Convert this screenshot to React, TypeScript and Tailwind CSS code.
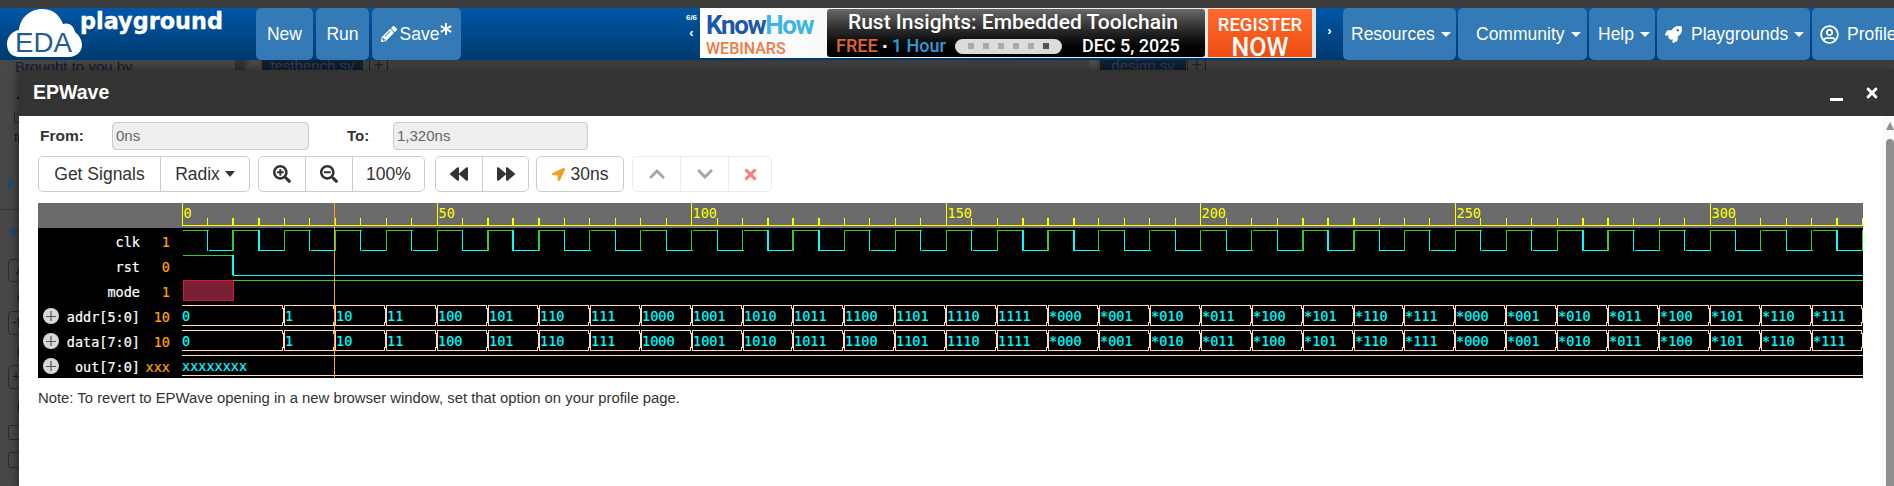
import React from "react";
import { FaPencilAlt, FaAsterisk, FaRocket, FaRegUserCircle, FaSearchPlus, FaSearchMinus, FaBackward, FaForward, FaLocationArrow, FaChevronUp, FaChevronDown, FaTimes } from "react-icons/fa";

const Caret = () => <span className="ml-[6px] inline-block h-0 w-0 border-x-[5px] border-t-[5px] border-x-transparent border-t-white" />;
const DarkCaret = () => <span className="ml-[5px] inline-block h-0 w-0 border-x-[5px] border-t-[6px] border-x-transparent border-t-[#333]" />;

function NavBtn({ className, children }: { className: string; children: React.ReactNode }) {
  return <div className={"flex h-[52px] shrink-0 items-center rounded-[5px] bg-[#337ab7] text-[17.5px] text-white " + className}>{children}</div>;
}

const Logo = () => (
  <svg width="240" height="52" viewBox="0 8 240 52" className="shrink-0">
    <path d="M20 57 C10 57 7 50 7 44 C7 37 12 31 19 30 C20 18 30 9 42 9 C52 9 59 14 63 24 C68 22 74 25 75 32 C79 35 82 40 82 45 C82 52 76 57 69 57 Z" fill="#fff" />
    <text x="15" y="52" fontFamily="Liberation Sans" fontSize="28" fill="#1f5c99" textLength="57" lengthAdjust="spacingAndGlyphs">EDA</text>
    <text x="80" y="29" fontFamily="DejaVu Sans" fontWeight="700" fontSize="23" fill="#fff" stroke="#fff" strokeWidth="0.4" textLength="143" lengthAdjust="spacingAndGlyphs">playground</text>
  </svg>
);

function Banner() {
  return (
    <div className="flex h-[50px] w-[616px] shrink-0 gap-[3px] bg-gradient-to-r from-white to-[#e4e4e4] py-px pl-px pr-[4px] font-['Roboto',sans-serif]">
      <div className="flex w-[123px] shrink-0 flex-col pl-[5px] pt-[3px]">
        <div className="text-[26px] font-bold leading-[27px] tracking-[-1.4px] text-[#1d58a8]">Know<span className="text-[#3eb4e8]">How</span></div>
        <div className="mt-[1px] text-[16px] font-medium leading-[18px] text-[#ee7a45]">WEBINARS</div>
      </div>
      <div className="flex w-[378px] shrink-0 flex-col rounded-[3px] bg-gradient-to-b from-[#6a6a6a] via-[#222] to-black px-[9px] text-white">
        <div className="mt-px pr-[6px] text-center text-[21px] font-medium leading-[25px]">Rust Insights: Embedded Toolchain</div>
        <div className="mt-[1px] flex items-center text-[18px] font-medium leading-[20px]">
          <span className="text-[#e0632e]">FREE</span>
          <span className="ml-[5px] text-[12px] text-white">▪</span>
          <span className="ml-[5px] text-[#2d9fd8]">1 Hour</span>
          <span className="ml-[9px] flex h-[15px] w-[107px] items-center justify-center gap-[9px] rounded-full bg-[#dcdcdc]">
            {[0, 1, 2, 3, 4].map((i) => <i key={i} className="h-[6px] w-[6px] bg-[#aaa]" />)}
            <i className="h-[6px] w-[6px] bg-[#555]" />
          </span>
          <span className="ml-[20px]">DEC 5, 2025</span>
        </div>
      </div>
      <div className="flex w-[104px] shrink-0 flex-col items-center bg-gradient-to-b from-[#ff6a2a] to-[#f04c0e] text-white">
        <div className="mt-[4px] text-[18.5px] font-medium leading-[24px]">REGISTER</div>
        <div className="text-[25px] font-medium leading-[22px]">NOW</div>
      </div>
    </div>
  );
}

function Nav() {
  return (
    <div className="flex h-[52px] bg-gradient-to-b from-[#0057a6] to-[#003a70]">
      <Logo />
      <div className="ml-4 flex gap-[3px]">
        <NavBtn className="w-[57px] justify-center">New</NavBtn>
        <NavBtn className="w-[53px] justify-center">Run</NavBtn>
        <NavBtn className="w-[89px] justify-center gap-[3px]"><FaPencilAlt size={16} />Save<FaAsterisk size={12} className="mb-[10px] -ml-[2px]" /></NavBtn>
      </div>
      <div className="ml-[222px] flex w-[17px] shrink-0 flex-col items-center pt-[5px] text-white">
        <span className="text-[8px] font-bold leading-[10px]">6/6</span>
        <span className="mt-[3px] text-[13px] font-bold leading-[14px]">‹</span>
      </div>
      <Banner />
      <div className="flex w-[27px] shrink-0 justify-center pt-[16px] text-[13px] font-bold leading-[14px] text-white">›</div>
      <div className="flex gap-[2px]">
        <NavBtn className="w-[113px] pl-[8px]">Resources<Caret /></NavBtn>
        <NavBtn className="w-[129px] pl-[18px]">Community<Caret /></NavBtn>
        <NavBtn className="w-[66px] pl-[9px]">Help<Caret /></NavBtn>
        <NavBtn className="w-[153px] pl-[8px]"><FaRocket size={17} /><span className="ml-[9px]">Playgrounds</span><Caret /></NavBtn>
        <NavBtn className="w-[110px] pl-[8px]"><FaRegUserCircle size={19} /><span className="ml-[8px]">Profile</span></NavBtn>
      </div>
    </div>
  );
}

function Behind() {
  const box = "ml-[8px] w-[60px] rounded-[4px] border border-[#2c2c2c] text-[14px] text-[#1d1d1d]";
  return (
    <div className="flex h-[426px] overflow-hidden bg-[#484848] text-[15px]">
      <div className="flex w-[235px] shrink-0 flex-col">
        <div className="ml-[15px] h-[32px] whitespace-nowrap leading-[13px] text-[#142030]">Brought to you by</div>
        <div className="ml-[16px] h-0 w-0 border-x-[5px] border-b-[7px] border-x-transparent border-b-[#182a3e]" />
        <div className="ml-[14px] mt-[14px] h-[10px] w-[10px] border border-[#1c2a38]" />
        <div className="ml-[14px] mt-[8px] text-[12px] leading-[14px] text-[#1c1c1c]">from</div>
        <div className="ml-[8px] mt-[32px] h-0 w-0 border-y-[6px] border-l-[7px] border-y-transparent border-l-[#1e4a6e]" />
        <div className="mt-[20px] h-px bg-[#363636]" />
        <div className="ml-[8px] mt-[19px] h-0 w-0 border-x-[6px] border-t-[8px] border-x-transparent border-t-[#1e4a6e]" />
        <div className={box + " mt-[22px] h-[23px] pl-[7px]"}>A</div>
        <div className="ml-[17px] mt-[9px] h-[14px] text-[14px] font-bold leading-[14px] text-[#1d1d1d]">C</div>
        <div className={box + " mt-[6px] h-[24px] pl-[3px]"}>-t</div>
        <div className="ml-[17px] mt-[10px] h-[14px] font-bold leading-[14px] text-[#1d1d1d]">E</div>
        <div className={box + " mt-[6px] h-[24px] pl-[3px]"}>+</div>
        <div className="ml-[17px] mt-[11px] h-[14px] font-bold leading-[14px] text-[#1d1d1d]">R</div>
        <div className="ml-[8px] mt-[11px] h-[15px] w-[15px] rounded-[2px] border border-[#2c2c2c]" />
        <div className="ml-[8px] mt-[12px] h-[16px] w-[15px] rounded-[2px] border border-[#2c2c2c]" />
      </div>
      <div className="flex h-[10px] flex-1 bg-gradient-to-b from-[#3c3c3c] to-[#4a4a4a]">
        <div className="h-full w-[10px] bg-[#343434]" />
        <div className="ml-[4px] h-full w-[11px] bg-[#4a4a4a]" />
        <div className="ml-[2px] h-full w-[101px] overflow-hidden bg-[#0f2233] text-center leading-[11px] text-[#34404e]">testbench.sv</div>
        <div className="ml-[6px] flex h-full w-[19px] items-center justify-center border-x border-[#222] text-[18px] leading-[10px] text-[#222]">+</div>
        <div className="ml-[701px] h-full w-[8px] bg-[#4e4e4e]" />
        <div className="ml-[3px] h-full w-[86px] overflow-hidden bg-[#0f2233] text-center leading-[11px] text-[#34404e]">design.sv</div>
        <div className="ml-px flex h-full w-[19px] items-center justify-center border-x border-[#222] text-[18px] leading-[10px] text-[#222]">+</div>
      </div>
    </div>
  );
}

const THICK = new Set([2, 3, 12, 13, 14, 23, 24, 25, 33, 34, 35, 44, 45, 46, 55, 56, 65, 66]);
const xk = (k: number) => 182.4 + 25.46 * k;
const ln = (v: number) => Math.floor(v) + 0.5;
const MONO = "'DejaVu Sans Mono', monospace";
const BUS = "#ffdab9";
const GREEN = "#32cd32";
const CYAN = "#00ffff";
const ORANGE = "#ffa500";

function edge(k: number, y1: number, y2: number, color: string) {
  const thick = THICK.has(k);
  const x = thick ? Math.round(xk(k)) : ln(xk(k));
  return <line key={`e${k}`} x1={x} x2={x} y1={y1} y2={y2} stroke={color} strokeWidth={thick ? 2 : 1} />;
}

function busLabel(v: number) {
  if (v < 16) return v.toString(2);
  return "*" + (v % 8).toString(2).padStart(3, "0");
}

function Bus({ top }: { top: number }) {
  const bot = top + 20;
  const items = [];
  const tA = top + 0.5;
  const bA = bot + 0.5;
  for (let v = 0; v < 32; v++) {
    const s = v === 0 ? 182 : Math.round(xk(2 + 2 * v));
    const e = Math.round(xk(4 + 2 * v));
    const d = v === 0
      ? `M${s} ${tA} H${e - 2} L${e - 1} ${tA + 3} V${bA - 3} L${e - 2} ${bA} H${s}`
      : `M${s} ${tA + 3} L${s + 1} ${tA} H${e - 2} L${e - 1} ${tA + 3} V${bA - 3} L${e - 2} ${bA} H${s + 1} L${s} ${bA - 3} Z`;
    items.push(<path key={v} d={d} fill="none" stroke={BUS} strokeWidth={1} shapeRendering="crispEdges" />);
    items.push(<text key={`t${v}`} x={v === 0 ? 182 : s + 1} y={top + 16} fill={CYAN} stroke={CYAN} strokeWidth="0.2" fontFamily={MONO} fontSize="13.5">{busLabel(v)}</text>);
  }
  return <g>{items}</g>;
}

function Plus({ cy }: { cy: number }) {
  return (
    <g>
      <circle cx="51" cy={cy} r="8" fill="#d8d8d8" />
      <path d={`M46 ${cy + 0.5} H56 M51 ${cy - 5} V${cy + 5}`} stroke="#555" strokeWidth="1.2" />
    </g>
  );
}

function Wave() {
  const ticks = [];
  for (let k = 0; k <= 66; k++) {
    const major = k % 10 === 0;
    const thick = THICK.has(k);
    const x = thick ? Math.round(xk(k)) : ln(xk(k));
    ticks.push(<line key={k} x1={x} x2={x} y1={major ? 203 : 218} y2={226} stroke="#ffff00" strokeWidth={thick ? 2 : 1} />);
    if (major) ticks.push(<text key={`l${k}`} x={x + 1} y={218} fill="#ffff00" fontFamily={MONO} fontSize="13.5">{k * 5}</text>);
  }
  const clk = [];
  for (let k = 0; k <= 66; k++) {
    if (k < 66) {
      const a = xk(k), b = xk(k + 1);
      const hi = k % 2 === 0;
      clk.push(<line key={`h${k}`} x1={Math.round(a) + 1} x2={Math.round(b) + 1} y1={hi ? 230.5 : 250.5} y2={hi ? 230.5 : 250.5} stroke={hi ? GREEN : CYAN} />);
    }
    if (k > 0) clk.push(edge(k, 230, 251, k % 2 === 0 ? GREEN : CYAN));
  }
  const names: [string, string, number][] = [["clk", "1", 247], ["rst", "0", 272], ["mode", "1", 297], ["addr[5:0]", "10", 322], ["data[7:0]", "10", 347], ["out[7:0]", "xxx", 372]];
  return (
    <svg width="1825" height="175" viewBox="38 203 1825 175" className="block bg-black">
      <rect x="38" y="203" width="1825" height="25" fill="#6b6b6b" />
      <line x1="182" x2="1863" y1="225.5" y2="225.5" stroke="#ffff00" />
      {ticks}
      {names.map(([n, v, y]) => (
        <g key={n} fontFamily={MONO} fontSize="13.5" strokeWidth="0.2">
          <text x="140" y={y} textAnchor="end" fill="#fff" stroke="#fff">{n}</text>
          <text x="170" y={y} textAnchor="end" fill={ORANGE} stroke={ORANGE}>{v}</text>
        </g>
      ))}
      <Plus cy={316} />
      <Plus cy={341} />
      <Plus cy={366} />
      {clk}
      <path d="M183 255.5 H233" stroke={GREEN} fill="none" />
      <path d="M233 255 V275.5 H1863" stroke={CYAN} fill="none" />
      <line x1="233" x2="233" y1="255" y2="275" stroke={CYAN} strokeWidth="2" />
      <rect x="183.5" y="280.5" width="50" height="20" fill="#7a2035" stroke="#dc143c" />
      <line x1="233" x2="1863" y1="280.5" y2="280.5" stroke={GREEN} />
      <Bus top={305} />
      <Bus top={330} />
      <line x1="182" x2="1863" y1="355.5" y2="355.5" stroke={BUS} />
      <line x1="182" x2="1863" y1="375.5" y2="375.5" stroke={BUS} />
      <text x="182" y="371" fill={CYAN} stroke={CYAN} strokeWidth="0.2" fontFamily={MONO} fontSize="13.5">xxxxxxxx</text>
      <line x1="334.5" x2="334.5" y1="203" y2="378" stroke="#f5a623" />
    </svg>
  );
}

const seg = "flex h-full items-center justify-center border-r border-[#ccc] last:border-r-0";
const group = "flex h-[36px] shrink-0 rounded-[5px] border border-[#ccc] text-[17.5px] text-[#333]";

function Modal() {
  return (
    <div className="absolute bottom-0 left-[19px] right-0 top-[70px] flex flex-col shadow-[0_0_10px_rgba(0,0,0,0.6)]">
      <div className="flex h-[46px] shrink-0 items-center bg-[#333] pl-[14px] text-white">
        <span className="text-[19.5px] font-bold">EPWave</span>
        <svg width="14" height="3" className="ml-[1721px] mt-[12px]"><rect width="13" height="3" fill="#fff" /></svg>
        <FaTimes size={16} className="ml-[20px] -mt-[1px] text-white" />
      </div>
      <div className="flex min-h-0 flex-1 bg-white">
        <div className="min-w-0 flex-1 pl-[19px] text-[#333]">
          <div className="mt-[6px] flex h-[28px] items-center text-[15px]">
            <span className="ml-[2px] w-[72px] text-[15.5px] font-bold">From:</span>
            <div className="flex h-full w-[197px] items-center rounded-[4px] border border-[#ccc] bg-[#eee] pl-[3px] text-[#666]">0ns</div>
            <span className="ml-[38px] w-[46px] text-[15px] font-bold">To:</span>
            <div className="flex h-full w-[195px] items-center rounded-[4px] border border-[#ccc] bg-[#eee] pl-[3px] text-[#666]">1,320ns</div>
          </div>
          <div className="mt-[6px] flex">
            <div className={group + " w-[212px]"}>
              <div className={seg + " w-[122px]"}>Get Signals</div>
              <div className={seg + " flex-1"}>Radix<DarkCaret /></div>
            </div>
            <div className={group + " ml-[8px] w-[167px]"}>
              <div className={seg + " w-[47px]"}><FaSearchPlus size={18} /></div>
              <div className={seg + " w-[47px]"}><FaSearchMinus size={18} /></div>
              <div className={seg + " flex-1"}>100%</div>
            </div>
            <div className={group + " ml-[10px] w-[94px]"}>
              <div className={seg + " w-[47px]"}><FaBackward size={18} /></div>
              <div className={seg + " flex-1"}><FaForward size={18} /></div>
            </div>
            <div className={group + " ml-[7px] w-[88px] items-center justify-center gap-[6px]"}>
              <FaLocationArrow size={13} className="text-[#f0a020]" />30ns
            </div>
            <div className="ml-[8px] flex h-[36px] w-[140px] shrink-0 rounded-[5px] border border-[#ebebeb]">
              <div className="flex h-full w-[48px] items-center justify-center border-r border-[#ebebeb]"><FaChevronUp size={18} className="text-[#a6a6a6]" /></div>
              <div className="flex h-full w-[48px] items-center justify-center border-r border-[#ebebeb]"><FaChevronDown size={18} className="text-[#a6a6a6]" /></div>
              <div className="flex h-full flex-1 items-center justify-center"><FaTimes size={17} className="text-[#f77f7f]" /></div>
            </div>
          </div>
          <div className="mt-[11px]"><Wave /></div>
          <p className="mt-[10px] text-[14.85px] leading-[20px] text-[#333]">Note: To revert to EPWave opening in a new browser window, set that option on your profile page.</p>
        </div>
        <div className="flex w-[12px] shrink-0 flex-col items-end bg-[#fafafa]">
          <div className="mt-[6px] h-0 w-0 border-x-[4px] border-b-[8px] border-x-transparent border-b-[#8f8f8f]" />
          <div className="mt-[9px] w-[8px] flex-1 rounded-t-[4px] bg-[#8f8f8f]" />
        </div>
      </div>
    </div>
  );
}

export default function App() {
  return (
    <div className="relative h-[486px] w-[1894px] overflow-hidden bg-[#3b3b3b] font-['Liberation_Sans',Arial,sans-serif]">
      <div className="h-2" />
      <Nav />
      <Behind />
      <Modal />
    </div>
  );
}
